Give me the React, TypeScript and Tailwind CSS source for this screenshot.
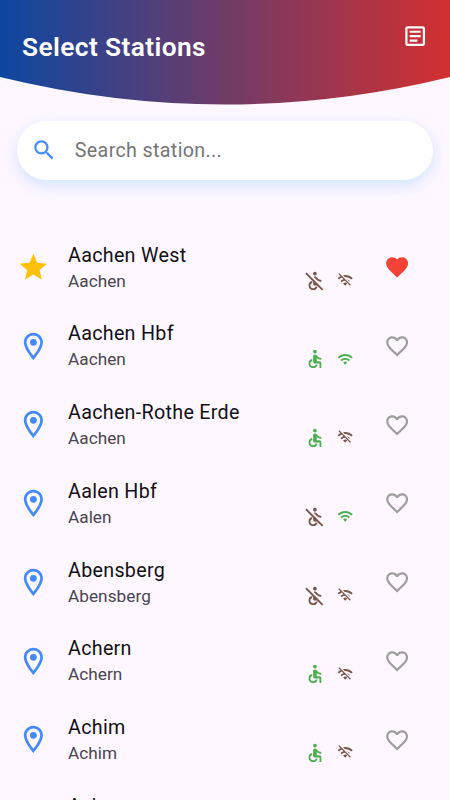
import { FC, useState } from "react";
import {
    MdAccessible,
    MdFavorite,
    MdFavoriteBorder,
    MdNotAccessible,
    MdOutlineArticle,
    MdOutlineLocationOn,
    MdSearch,
    MdStar,
    MdWifi,
    MdWifiOff,
} from "react-icons/md";

interface Station {
    name: string;
    city: string;
    accessible: boolean;
    wifi: boolean;
}

const stations: Station[] = [
    { name: "Aachen West", city: "Aachen", accessible: false, wifi: false },
    { name: "Aachen Hbf", city: "Aachen", accessible: true, wifi: true },
    { name: "Aachen-Rothe Erde", city: "Aachen", accessible: true, wifi: false },
    { name: "Aalen Hbf", city: "Aalen", accessible: false, wifi: true },
    { name: "Abensberg", city: "Abensberg", accessible: false, wifi: false },
    { name: "Achern", city: "Achern", accessible: true, wifi: false },
    { name: "Achim", city: "Achim", accessible: true, wifi: false },
    { name: "Achmer", city: "Achmer", accessible: true, wifi: false },
];

const Header: FC = () => (
    <header className="relative h-[104px] shrink-0">
        <svg className="absolute inset-0" width="450" height="105" viewBox="0 0 450 105">
            <defs>
                <linearGradient id="header" x1="0" x2="1" y1="0" y2="0">
                    <stop offset="0" stopColor="#0d47a1" />
                    <stop offset="1" stopColor="#d32f2f" />
                </linearGradient>
            </defs>
            <path d="M0 0H450V77Q225 132 0 77Z" fill="url(#header)" />
        </svg>
        <div className="relative flex justify-between pl-[22px] pr-[22px]">
            <h1 className="mt-[29px] text-[26.3px] leading-9 font-semibold tracking-[0.4px] text-white">Select Stations</h1>
            <button type="button" aria-label="Articles" className="mt-[23px] h-[26px] text-white">
                <MdOutlineArticle size={26.3} />
            </button>
        </div>
    </header>
);

interface StationRowProps {
    station: Station;
    favorite: boolean;
    onToggle: () => void;
}

const StationRow: FC<StationRowProps> = ({ station, favorite, onToggle }) => (
    <li className="flex h-[78.77px] shrink-0 items-center pl-[17px] pr-[39.5px]">
        {favorite ? (
            <MdStar size={32.8} className="shrink-0 text-[#ffc107]" />
        ) : (
            <MdOutlineLocationOn size={32.8} className="shrink-0 text-[#448aff]" />
        )}
        <div className="ml-[18.2px] flex-1">
            <p className="pt-[2.6px] text-[19.7px] leading-[26px] tracking-[0.3px] text-[#111014]">{station.name}</p>
            <div className="flex h-[26px] items-center">
                <p className="mb-[2px] flex-1 text-[17.2px] leading-[26px] tracking-[0.05px] text-[#49454f]">{station.city}</p>
                {station.accessible ? (
                    <MdAccessible size={21.9} className="mb-[2px] text-[#4caf50]" />
                ) : (
                    <MdNotAccessible size={21.9} className="mb-[2px] text-[#795548]" />
                )}
                {station.wifi ? (
                    <MdWifi size={16.4} className="mb-[3px] ml-[11px] text-[#4caf50]" />
                ) : (
                    <MdWifiOff size={16.4} className="mb-[3px] ml-[11px] text-[#795548]" />
                )}
            </div>
        </div>
        <button type="button" aria-label="Favorite" onClick={onToggle} className="ml-[30.5px]">
            {favorite ? (
                <MdFavorite size={26.3} className="text-[#f44336]" />
            ) : (
                <MdFavoriteBorder size={26.3} className="text-[#9e9e9e]" />
            )}
        </button>
    </li>
);

const App: FC = () => {
    const [favorites, setFavorites] = useState<string[]>(["Aachen West"]);

    const toggle = (name: string) => {
        setFavorites((prev) =>
            prev.includes(name) ? prev.filter((item) => item !== name) : [...prev, name]
        );
    };

    return (
        <div className="flex h-[800px] w-[450px] flex-col overflow-hidden bg-[#fef7ff] font-[Roboto,sans-serif]">
            <Header />
            <label className="mx-[17.3px] mt-[17px] flex h-[59px] shrink-0 items-center rounded-full bg-white pl-[13.5px] shadow-[0_5.5px_16px_rgba(33,150,243,0.2)]">
                <MdSearch size={26.3} className="text-[#448aff]" />
                <input
                    type="text"
                    placeholder="Search station..."
                    className="ml-[17.7px] flex-1 pt-px text-[19.7px] tracking-[0.34px] text-black outline-none placeholder:text-[#757575]"
                />
            </label>
            <ul className="mt-[47.9px] flex flex-col">
                {stations.map((station) => (
                    <StationRow
                        key={station.name}
                        station={station}
                        favorite={favorites.includes(station.name)}
                        onToggle={() => toggle(station.name)}
                    />
                ))}
            </ul>
        </div>
    );
};

export default App;
